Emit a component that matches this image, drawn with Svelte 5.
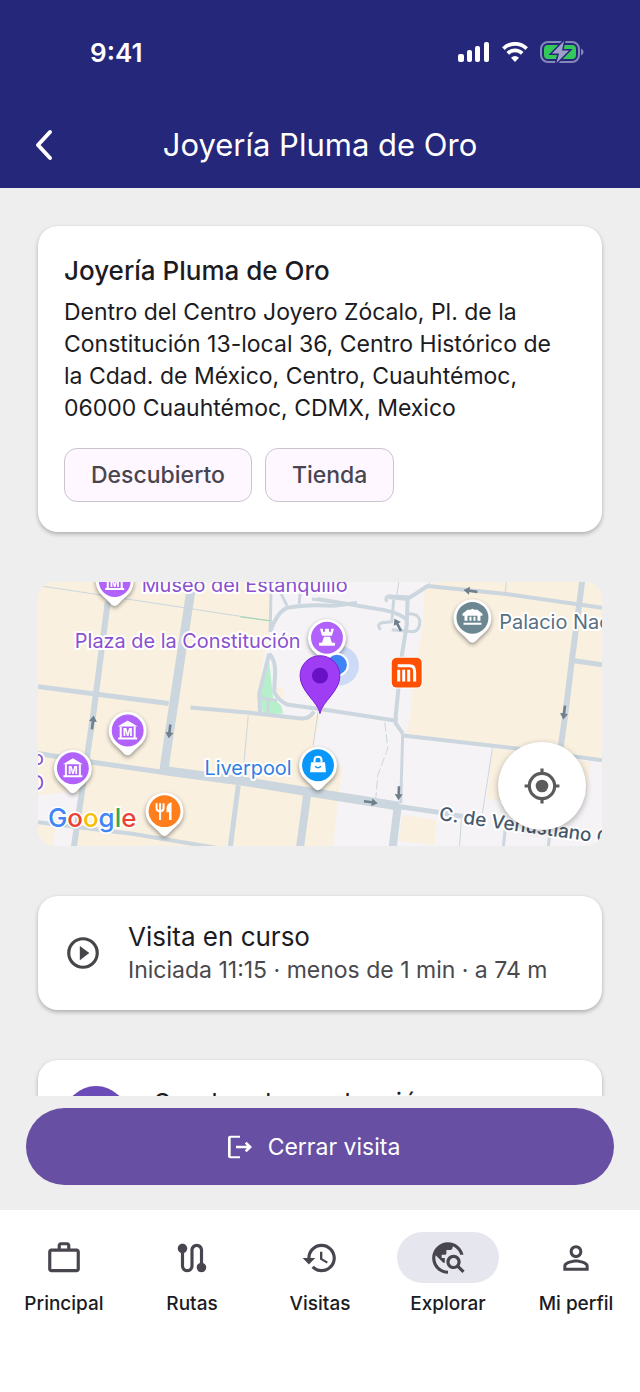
<script lang="ts">
    const place = {
        name: "Joyería Pluma de Oro",
        address: "Dentro del Centro Joyero Zócalo, Pl. de la Constitución 13-local 36, Centro Histórico de la Cdad. de México, Centro, Cuauhtémoc, 06000 Cuauhtémoc, CDMX, Mexico",
        tags: ["Descubierto", "Tienda"],
    };

    let active = $state("Explorar");

    // material icons, 24x24
    const tabs = [
        { label: "Principal", icon: "M14 6V4h-4v2h4zM4 8v11h16V8H4zm16-2c1.11 0 2 .89 2 2v11c0 1.11-.89 2-2 2H4c-1.11 0-2-.89-2-2l.01-11c0-1.11.88-2 1.99-2h4V4c0-1.11.89-2 2-2h4c1.11 0 2 .89 2 2v2h4z" },
        { label: "Rutas", icon: "M19 15.18V7c0-2.21-1.79-4-4-4s-4 1.79-4 4v10c0 1.1-.9 2-2 2s-2-.9-2-2V8.82C8.16 8.4 9 7.3 9 6c0-1.66-1.34-3-3-3S3 4.34 3 6c0 1.3.84 2.4 2 2.82V17c0 2.21 1.79 4 4 4s4-1.79 4-4V7c0-1.1.9-2 2-2s2 .9 2 2v8.18A2.996 2.996 0 0018 21c1.66 0 3-1.34 3-3 0-1.3-.84-2.4-2-2.82z" },
        { label: "Visitas", icon: "M13 3c-4.97 0-9 4.03-9 9H1l3.89 3.89.07.14L9 12H6c0-3.87 3.13-7 7-7s7 3.13 7 7-3.13 7-7 7c-1.93 0-3.68-.79-4.94-2.06l-1.42 1.42C8.27 19.99 10.51 21 13 21c4.97 0 9-4.03 9-9s-4.03-9-9-9zm-1 5v5l4.28 2.54.72-1.21-3.5-2.08V8H12z" },
        { label: "Explorar", icon: "M19.3 16.9c.4-.7.7-1.5.7-2.4 0-2.5-2-4.5-4.5-4.5S11 12 11 14.5s2 4.5 4.5 4.5c.9 0 1.7-.3 2.4-.7l3.2 3.2 1.4-1.4-3.2-3.2zm-3.8.1c-1.4 0-2.5-1.1-2.5-2.5s1.1-2.5 2.5-2.5 2.5 1.1 2.5 2.5-1.1 2.5-2.5 2.5zM12 20v2C6.48 22 2 17.52 2 12S6.48 2 12 2c4.84 0 8.87 3.44 9.8 8h-2.07c-.64-2.46-2.4-4.47-4.73-5.41V5c0 1.1-.9 2-2 2h-2v2c0 .55-.45 1-1 1H8v2h2v3H9l-4.79-4.79C4.08 10.79 4 11.38 4 12c0 4.41 3.59 8 8 8z" },
        { label: "Mi perfil", icon: "M12 5.9c1.16 0 2.1.94 2.1 2.1s-.94 2.1-2.1 2.1S9.9 9.16 9.9 8s.94-2.1 2.1-2.1m0 9c2.97 0 6.1 1.46 6.1 2.1v1.1H5.9V17c0-.64 3.13-2.1 6.1-2.1M12 4C9.79 4 8 5.79 8 8s1.79 4 4 4 4-1.79 4-4-1.79-4-4-4zm0 9c-2.67 0-8 1.34-8 4v3h16v-3c0-2.66-5.33-4-8-4z" },
    ];

    // roads: [width, path]
    const roads: [number, string][] = [
        [6, "M70 20 L56 129 L48 184 L36 266"],
        [9, "M155 -2 L136 124 L126 191"],
        [5, "M0 105 L131 122"],
        [1, "M3 4 L233 39"],
        [4, "M153 126 L210 131 L264 137 Q272 138 277 130"],
        [5, "M0 172 L55 181 L125 191"],
        [9, "M124 189 L206 200 L293 214 L362 225"],
        [5, "M360 225 L401 231 L430 236"],
        [4, "M0 241 L96 253 L180 267"],
        [5, "M201 204 L193 266"],
        [8, "M270 214 L263 266"],
        [8, "M361 225 L356 266"],
        [1, "M211 134 L205 199"],
        [1, "M281 131 L276 164"],
        [3, "M234 0 L233 50"],
        [4, "M233 50 Q240 30 250 26 Q270 22 297 24"],
        [3, "M244 12 L250 24 M263 12 L262 22 M275 17 L297 20"],
        [4, "M280 17 L340 27 Q362 30 370 38"],
        [4, "M297 24 L320 21"],
        [4, "M232 72 L222 112 L223 134"],
        [4, "M232 72 Q238 78 238 90 L237 110 Q240 118 250 123 L293 129 L358 139"],
        [3, "M222 116 L240 119 M231 118 L231 134"],
        [4, "M371 15 L370 44 L365 74 L359 134 L359 142 L366 152"],
        [3, "M366 152 L364 222"],
        [4, "M566 26 L470 12 L391 4 L371 17 L351 15"],
        [3, "M350 20 Q347 13 355 14 L374 15"],
        [3, "M357 18 L355 40 L345 41 Q339 43 344 48 M355 48 L376 50 Q384 49 383 38 Q381 31 370 32"],
        [4, "M366 154 L480 167 L566 179"],
        [6, "M546 0 L536 77 L529 134 L524 170"],
        [5, "M538 79 L566 83"],
        [1, "M362 0 L360 14 M393 0 L392 4 M470 0 L469 12"],
        [1, "M456 167 L446 232 M425 238 L423 265"],
        [3, "M469 246 L467 266 M514 250 L512 266"],
    ];

    // one-way arrows: x, y, rotation from pointing up
    const arrows = [
        [55, 141, 7],
        [132, 150, 187],
        [434, 9, 278],
        [361, 43, -28],
        [528, 131, 187],
        [334, 221, 98],
        [362, 212, 182],
    ];

    const pins = [
        { x: 77, y: -1, color: "#b062fa", kind: "museum" },
        { x: 90, y: 149, color: "#b062fa", kind: "museum" },
        { x: 35, y: 187, color: "#b062fa", kind: "museum" },
        { x: 127, y: 230, color: "#ff7f1f", kind: "food" },
        { x: 281, y: 184, color: "#0a97fa", kind: "shop" },
        { x: 436, y: 36, color: "#6c8791", kind: "palace" },
        { x: 290, y: 56, color: "#b062fa", kind: "tower" },
    ];
</script>

<div class="screen">
    <header>
        <div class="status">
            <span class="time">9:41</span>
            <div class="signals">
                <svg width="32" height="20" viewBox="0 0 32 20" fill="#fff">
                    <rect x="0" y="12" width="6" height="8" rx="2" />
                    <rect x="9" y="8" width="5" height="12" rx="2" />
                    <rect x="17" y="4" width="5" height="16" rx="2" />
                    <rect x="26" y="0" width="5" height="20" rx="2" />
                </svg>
                <svg width="26" height="20" viewBox="0 0 26 20" fill="none" stroke="#fff" stroke-width="3.8">
                    <path d="M1.4 6.6 A16.5 16.5 0 0 1 24.6 6.6" />
                    <path d="M5.8 11.3 A10.2 10.2 0 0 1 20.2 11.3" />
                    <path d="M13 20 L9 15.7 Q13 12.4 17 15.7 Z" fill="#fff" stroke="none" />
                </svg>
                <svg width="44" height="22" viewBox="0 0 44 22">
                    <rect x="1" y="1" width="38" height="20" rx="7" fill="none" stroke="#8587b8" stroke-width="2" />
                    <rect x="4" y="4" width="32" height="14" rx="4" fill="#34c759" />
                    <path d="M41 7.5 q2.6 1 2.6 3.5 t-2.6 3.5z" fill="#8587b8" />
                    <path class="bolt" d="M24 0 L12 12.5 h7 L16.5 22 L29 9.5 h-7z" />
                </svg>
            </div>
        </div>
        <div class="titlebar">
            <button class="back" aria-label="Atrás">
                <svg width="20" height="32" viewBox="0 0 20 32" fill="none" stroke="#fff" stroke-width="4" stroke-linecap="round" stroke-linejoin="round">
                    <path d="M16 3 L4 16 L16 29" />
                </svg>
            </button>
            <h1>{place.name}</h1>
        </div>
    </header>

    <main>
        <section class="card place">
            <h2>{place.name}</h2>
            <p>{place.address}</p>
            <ul class="chips">
                {#each place.tags as tag}
                    <li>{tag}</li>
                {/each}
            </ul>
        </section>

        <section class="map">
            <svg class="tiles" viewBox="0 0 566 265" preserveAspectRatio="xMidYMid slice">
                <rect width="566" height="265" fill="#f5f3f5" />
                <!-- blocks -->
                <g fill="#f9f0df">
                    <path d="M0 0 H233 L234 44 L225 80 L222 130 L240 137 L283 133 L277 166 L305 187 L296 265 H36 L40 210 L0 214Z" />
                    <path d="M388 5 L386 44 L376 104 L374 134 L369 154 L480 167 L566 179 V0 H400Z" />
                    <path d="M456 167 L451 217 L475 222 L490 170Z" />
                    <path d="M366 234 L400 239 L398 264 L362 260Z" />
                    <path d="M536 178 L555 181 L550 211 L536 210Z" />
                    <path d="M0 244 L18 246 L15 265 H0Z" />
                    <path d="M239 105 L247 107 L245 121 L240 115Z" />
                </g>
                <path d="M232 80 L223 115 L226 133 L246 132 L244 124 L236 117Z" fill="#b5f0cb" />
                <g fill="none" stroke="#cbd6de">
                    {#each roads as [w, d]}
                        <path {d} stroke-width={w} stroke-linejoin="round" />
                    {/each}
                    <path d="M348 141 L351 167 L341 194 L339 217" stroke-dasharray="9 3" />
                    <path d="M203 35 L233 39" stroke="#9ad8af" />
                </g>
                {#each arrows as [x, y, r]}
                    <path transform="translate({x} {y}) rotate({r})" d="M0 -7 L4 -1 H1.3 V7 H-1.3 V-1 H-4Z" fill="#6f7f8b" />
                {/each}

                <g class="poi purple">
                    <text x="104" y="10">Museo del Estanquillo</text>
                    <text x="37" y="66">Plaza de la Constitución</text>
                    <text x="-6" y="184">o</text>
                    <text x="-9" y="209">O</text>
                </g>
                <text class="poi blue" x="167" y="194">Liverpool</text>
                <text class="poi slate" x="463" y="47">Palacio Nacional</text>
                <text class="poi street" transform="translate(402 239) rotate(8)">C. de Venustiano Carranza</text>

                <!-- own position -->
                <circle cx="302" cy="84" r="20" fill="#4285f4" opacity=".22" />

                {#each pins as pin}
                    <g class="pin" transform="translate({pin.x} {pin.y})">
                        <path d="M0 25 C-3 25 -5 21 -12 15 A19 19 0 1 1 12 15 C5 21 3 25 0 25Z" fill="#fff" />
                        <circle r="16" fill={pin.color} />
                        {#if pin.kind == "museum"}
                            <path d="M-10 -4 L0 -10 L10 -4Z" fill="#fff" />
                            <path d="M-7 -4 V7 M7 -4 V7 M-9.5 8 H9.5" fill="none" stroke="#fff" stroke-width="2" />
                            <text class="letter" y="6">M</text>
                        {:else if pin.kind == "food"}
                            <path d="M-4.5 9 V0 M-8 -8 V-3 Q-8 0 -4.5 0 Q-1 0 -1 -3 V-8 M-4.5 -8 V0" fill="none" stroke="#fff" stroke-width="2" />
                            <path d="M7 9 H4.5 V1 H2 V-4 Q3 -8 7 -9Z" fill="#fff" />
                        {:else if pin.kind == "shop"}
                            <path d="M-7 -3 H7 L8 7 H-8Z" fill="#fff" />
                            <path d="M-3.5 -3 V-5 Q-3.5 -8.5 0 -8.5 Q3.5 -8.5 3.5 -5 V-3" fill="none" stroke="#fff" stroke-width="2" />
                            <path d="M-3 1 Q0 4 3 1" fill="none" stroke={pin.color} stroke-width="1.5" />
                        {:else if pin.kind == "palace"}
                            <path d="M-10 -4 L-5 -8 H-2 L0 -9 L2 -8 H5 L10 -4 V-2 H-10Z M-8 -2 H-5 V3 H-8Z M-3 -1 V3 H-1 V-1Z M1 -1 V3 H3 V-1Z M5 -2 H8 V3 H5Z M-9 5 H9 V7 H-9Z" fill="#fff" />
                        {:else}
                            <path d="M-7 -9 H-4 V-6 H-2 V-9 H2 V-6 H4 V-9 H7 L5 -2 H-5Z M-3 -1 H3 L5 5 H-5Z M-8 5 H8 V8 H-8Z" fill="#fff" />
                        {/if}
                    </g>
                {/each}

                <!-- metro -->
                <rect x="354" y="75" width="32" height="32" rx="6" fill="#fff" />
                <rect x="355" y="76" width="30" height="30" rx="5" fill="#fe5000" />
                <path d="M361 84 H373 Q378 84 378 90 V100 M362 88 V100 M367 88 V100 M372 88 V100" fill="none" stroke="#fff" stroke-width="3" />

                <circle cx="300" cy="83" r="12" fill="#fff" />
                <circle cx="300" cy="83" r="10" fill="#3f83f5" />
                <path d="M283 132 C281 120 263 110 263 94 A20 20 0 0 1 303 94 C303 110 285 120 283 132Z" fill="#9f3df5" stroke="#7a1fd0" />
                <circle cx="283" cy="94" r="8" fill="#6a10c6" />

                <text class="google" x="10" y="246"
                    ><tspan fill="#4285f4">G</tspan><tspan fill="#ea4335">o</tspan><tspan fill="#fbbc04">o</tspan><tspan fill="#4285f4">g</tspan><tspan fill="#34a853">l</tspan><tspan fill="#ea4335">e</tspan></text
                >
            </svg>
            <button class="locate" aria-label="Mi ubicación">
                <svg width="38" height="38" viewBox="0 0 24 24" fill="none" stroke="#5b5b5b" stroke-width="2">
                    <circle cx="12" cy="12" r="8" />
                    <circle cx="12" cy="12" r="4" fill="#5b5b5b" stroke="none" />
                    <path d="M12 1 V4 M12 20 V23 M1 12 H4 M20 12 H23" />
                </svg>
            </button>
        </section>

        <section class="card visit">
            <svg width="38" height="38" viewBox="0 0 24 24">
                <circle cx="12" cy="12" r="9" fill="none" stroke="#46464a" stroke-width="2" />
                <path d="M10 16.5 L16 12 L10 7.5Z" fill="#46464a" />
            </svg>
            <div>
                <h3>Visita en curso</h3>
                <p>Iniciada 11:15 · menos de 1 min · a 74 m</p>
            </div>
        </section>

        <section class="card task">
            <span class="avatar"></span>
            <h3>Sondeo de producción</h3>
        </section>
    </main>

    <div class="action">
        <button>
            <svg width="32" height="32" viewBox="0 0 24 24" fill="#fff">
                <path d="M17 8l-1.41 1.41L17.17 11H9v2h8.17l-1.58 1.58L17 16l4-4-4-4zM5 5h7V3.5H5c-1.1 0-2 .7-2 1.5v14c0 .8.9 1.5 2 1.5h7V19H5V5z" />
            </svg>
            Cerrar visita
        </button>
    </div>

    <nav>
        {#each tabs as tab}
            <a href="#{tab.label}" class:active={tab.label == active} onclick={() => (active = tab.label)}>
                <span class="pill">
                    <svg width="38" height="38" viewBox="0 0 24 24"><path d={tab.icon} /></svg>
                </span>
                {tab.label}
            </a>
        {/each}
    </nav>
</div>

<style>
    :global(body) {
        margin: 0;
        background: #eeeeee;
    }

    .screen {
        display: flex;
        flex-direction: column;
        height: 100vh;
        font-family: "Inter", "Roboto", sans-serif;
        color: #1c1b1f;
    }

    h1, h2, h3, p, ul {
        margin: 0;
        padding: 0;
        font-weight: 400;
    }
    button {
        border: none;
        font: inherit;
        cursor: pointer;
    }

    header {
        padding-bottom: 2px;
        background: #25277a;
        color: white;
    }
    .status {
        display: flex;
        align-items: center;
        justify-content: space-between;
        height: 104px;
        padding: 0 56px 0 90px;
    }
    .time {
        font-size: 26px;
        font-weight: 600;
    }
    .signals {
        display: flex;
        align-items: center;
        gap: 12px;
    }
    .bolt {
        fill: #a09fcb;
        stroke: #25277a;
        stroke-width: 3px;
        paint-order: stroke;
    }
    .titlebar {
        display: grid;
        grid-template-columns: 60px 1fr 60px;
        align-items: center;
        height: 82px;
        padding: 0 16px;
    }
    .back {
        display: flex;
        padding: 8px 18px;
        background: none;
    }
    h1 {
        font-size: 31px;
        line-height: 40px;
        text-align: center;
    }

    main {
        flex: 1;
        min-height: 0;
        display: flex;
        flex-direction: column;
        gap: 50px;
        padding: 38px;
        overflow-y: auto;
        scrollbar-width: none;
    }
    .card {
        flex-shrink: 0;
        background: white;
        border-radius: 20px;
        box-shadow: 0 2px 4px rgba(0, 0, 0, 0.28);
    }

    .place {
        padding: 28px 38px 30px 26px;
    }
    h2 {
        font-size: 26px;
        font-weight: 500;
        line-height: 34px;
    }
    .place p {
        margin-top: 8px;
        font-size: 23px;
        line-height: 32px;
    }
    .chips {
        display: flex;
        gap: 13px;
        margin-top: 24px;
        list-style: none;
    }
    .chips li {
        padding: 0 26px;
        border: 1px solid #c9c4cf;
        border-radius: 13px;
        background: #fef7ff;
        color: #49454f;
        font-size: 23px;
        font-weight: 500;
        line-height: 52px;
    }

    .map {
        position: relative;
        flex-shrink: 0;
        height: 264px;
        border-radius: 16px;
        overflow: hidden;
    }
    .tiles {
        display: block;
        width: 100%;
        height: 100%;
    }
    .poi {
        font-size: 20px;
        paint-order: stroke;
        stroke: white;
        stroke-width: 4px;
        stroke-linejoin: round;
    }
    .purple {
        fill: #8a50cf;
    }
    .blue {
        fill: #2f7fe0;
    }
    .slate {
        fill: #587080;
    }
    .street {
        fill: #46586a;
        font-size: 19px;
        font-weight: 500;
    }
    .pin {
        filter: drop-shadow(0 2px 2px rgba(0, 0, 0, 0.4));
    }
    .letter {
        fill: white;
        font-size: 10px;
        font-weight: 800;
        text-anchor: middle;
    }
    .google {
        font-size: 26px;
        font-weight: 500;
        paint-order: stroke;
        stroke: white;
        stroke-width: 3px;
    }
    .locate {
        position: absolute;
        right: 16px;
        bottom: 16px;
        display: flex;
        align-items: center;
        justify-content: center;
        width: 88px;
        height: 88px;
        padding: 0;
        border-radius: 50%;
        background: white;
        box-shadow: 0 2px 6px rgba(0, 0, 0, 0.3);
    }

    .visit {
        display: flex;
        align-items: center;
        gap: 26px;
        padding: 24px 26px;
    }
    h3 {
        font-size: 26px;
        line-height: 34px;
    }
    .visit p {
        color: #49494d;
        font-size: 23px;
        line-height: 32px;
    }

    .task {
        display: flex;
        gap: 26px;
        padding: 26px;
    }
    .avatar {
        width: 64px;
        height: 64px;
        border-radius: 50%;
        background: #6b4bb8;
    }

    .action {
        padding: 12px 26px 25px;
        background: #eeeeee;
    }
    .action button {
        display: flex;
        align-items: center;
        justify-content: center;
        gap: 12px;
        width: 100%;
        height: 77px;
        padding: 0 16px 0 0;
        border-radius: 39px;
        background: #6750a4;
        color: white;
        font-size: 23px;
    }

    nav {
        display: grid;
        grid-template-columns: repeat(5, 1fr);
        padding: 22px 0 76px;
        background: white;
    }
    nav a {
        display: flex;
        flex-direction: column;
        align-items: center;
        gap: 8px;
        color: #1c1b1f;
        font-size: 19px;
        font-weight: 500;
        line-height: 25px;
        text-decoration: none;
    }
    .pill {
        display: flex;
        align-items: center;
        justify-content: center;
        width: 102px;
        height: 51px;
        border-radius: 26px;
    }
    .pill svg {
        fill: #49454f;
    }
    .active .pill {
        background: #e6e6ef;
    }
</style>
